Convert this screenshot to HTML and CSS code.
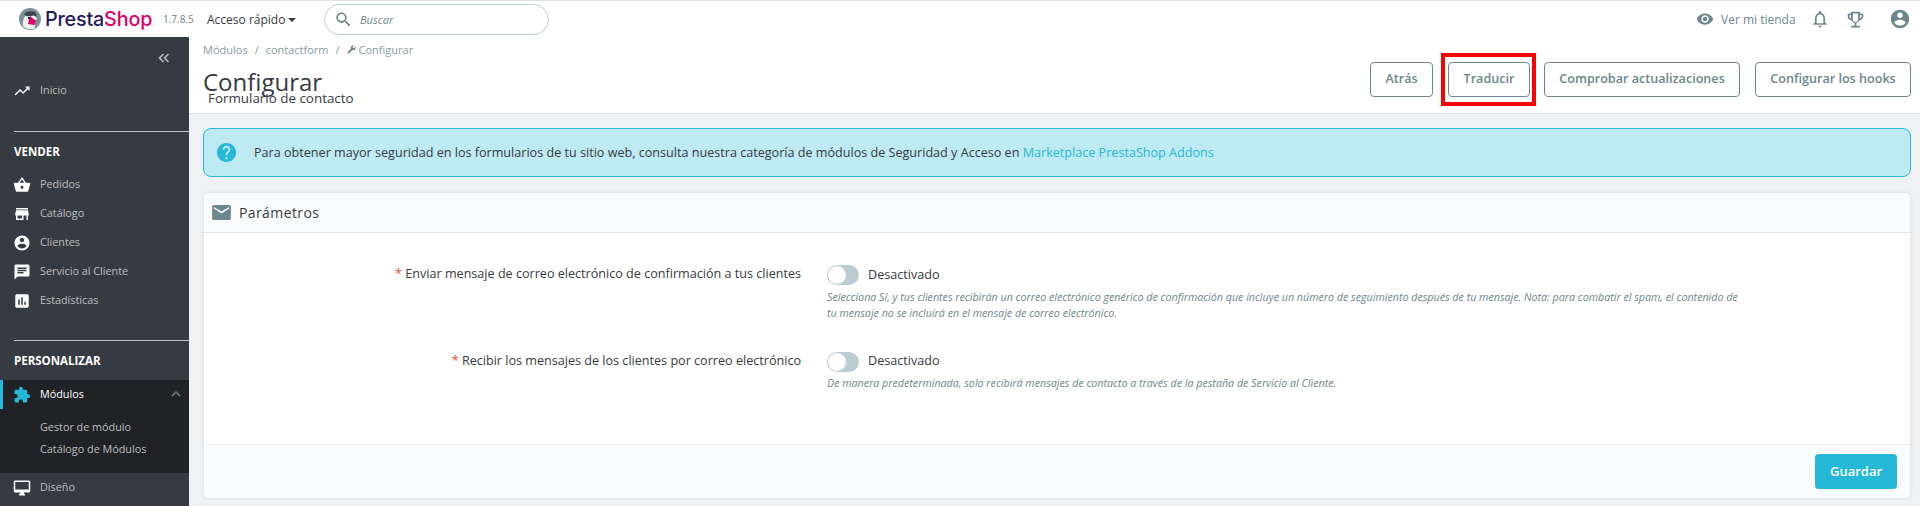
FILE: index.html
```html
<!DOCTYPE html>
<html lang="es">
<head>
  <meta charset="UTF-8">
  <title>Configurar - PrestaShop</title>
  <link rel="stylesheet" href="styles.css">
</head>
<body>
  <header class="topbar">
    <div class="logo">
      <svg class="logo-mark" viewBox="0 0 22 22">
        <circle cx="11" cy="11" r="11" fill="#7b8f99"/>
        <path d="M4 18c-1-6 2-13 8-13 4 0 6 3 6 6l-3 2 1 7c-2 2-9 2-12-2z" fill="#f4f1ee"/>
        <path d="M5 6c2-3 9-4 12-1l1 5c-2-3-4-3-6-2-3 0-5 1-7-2z" fill="#3c4450"/>
        <path d="M11 8l6 5-2 4-6-1z" fill="#df0067"/>
        <circle cx="10" cy="10" r="1.2" fill="#25234f"/>
      </svg>
      <span class="logo-name">Presta<span class="logo-pink">Shop</span></span>
    </div>
    <span class="version">1.7.8.5</span>
    <span class="quick">Acceso rápido<i class="caret"></i></span>
    <div class="search">
      <svg class="ic ic-search" viewBox="0 0 24 24"><path d="M15.5 14h-.79l-.28-.27C15.41 12.59 16 11.11 16 9.5 16 5.91 13.09 3 9.5 3S3 5.91 3 9.5 5.91 16 9.5 16c1.61 0 3.09-.59 4.23-1.57l.27.28v.79l5 4.99L20.49 19l-4.99-5zm-6 0C7.01 14 5 11.99 5 9.5S7.01 5 9.5 5 14 7.01 14 9.5 11.99 14 9.5 14z"/></svg>
      <span>Buscar</span>
    </div>
    <div class="top-right">
      <svg class="ic ic-eye" viewBox="0 0 24 24"><path d="M12 4.5C7 4.5 2.73 7.61 1 12c1.73 4.39 6 7.5 11 7.5s9.27-3.11 11-7.5c-1.73-4.39-6-7.5-11-7.5zM12 17c-2.76 0-5-2.24-5-5s2.24-5 5-5 5 2.24 5 5-2.24 5-5 5zm0-8c-1.66 0-3 1.34-3 3s1.34 3 3 3 3-1.34 3-3-1.34-3-3-3z"/></svg>
      <span class="shop-link">Ver mi tienda</span>
      <svg class="ic ic-bell" viewBox="0 0 24 24"><path d="M12 22c1.1 0 2-.9 2-2h-4c0 1.1.9 2 2 2zm6-6v-5c0-3.07-1.63-5.64-4.5-6.32V4c0-.83-.67-1.5-1.5-1.5s-1.5.67-1.5 1.5v.68C7.64 5.36 6 7.92 6 11v5l-2 2v1h16v-1l-2-2zm-2 1H8v-6c0-2.48 1.51-4.5 4-4.5s4 2.02 4 4.5v6z"/></svg>
      <svg class="ic ic-trophy" viewBox="0 0 24 24"><path fill-rule="evenodd" d="M19 5h-2V3H7v2H5c-1.1 0-2 .9-2 2v1c0 2.55 1.92 4.63 4.39 4.94.63 1.5 1.98 2.63 3.61 2.96V19H7v2h10v-2h-4v-3.1c1.63-.33 2.98-1.46 3.61-2.96C19.08 12.63 21 10.55 21 8V7c0-1.1-.9-2-2-2zM5 8V7h2v3.82C5.84 10.4 5 9.3 5 8zm10 4c0 1.65-1.35 3-3 3s-3-1.35-3-3V5h6v7zm4-4c0 1.3-.84 2.4-2 2.82V7h2v1z"/></svg>
      <svg class="ic ic-user" viewBox="0 0 24 24"><path d="M12 2C6.48 2 2 6.48 2 12s4.48 10 10 10 10-4.48 10-10S17.52 2 12 2zm0 3c1.66 0 3 1.34 3 3s-1.34 3-3 3-3-1.34-3-3 1.34-3 3-3zm0 14.2c-2.5 0-4.71-1.28-6-3.22.03-1.99 4-3.08 6-3.08 1.99 0 5.97 1.09 6 3.08-1.29 1.94-3.5 3.22-6 3.22z"/></svg>
    </div>
  </header>

  <div class="layout">
    <nav class="sidebar">
      <div class="collapse">
        <svg class="collapse-ic" viewBox="0 0 12 10"><path d="M5.5 1L1.5 5l4 4M10.5 1l-4 4 4 4"/></svg>
      </div>
      <a class="item item-home"><svg class="ic" viewBox="0 0 24 24"><path d="M16 6l2.29 2.29-4.88 4.88-4-4L2 16.59 3.41 18l6-6 4 4 6.3-6.29L22 12V6z"/></svg>Inicio</a>
      <div class="group">VENDER</div>
      <a class="item"><svg class="ic" viewBox="0 0 24 24"><path d="M17.21 9l-4.38-6.56c-.19-.28-.51-.42-.83-.42-.32 0-.64.14-.83.43L6.79 9H2c-.55 0-1 .45-1 1 0 .09.01.18.04.27l2.54 9.27c.23.84 1 1.46 1.92 1.46h13c.92 0 1.69-.62 1.93-1.46l2.54-9.27L23 10c0-.55-.45-1-1-1h-4.79zM9 9l3-4.4L15 9H9zm3 8c-1.1 0-2-.9-2-2s.9-2 2-2 2 .9 2 2-.9 2-2 2z"/></svg>Pedidos</a>
      <a class="item"><svg class="ic" viewBox="0 0 24 24"><path d="M20 4H4v2h16V4zm1 10v-2l-1-5H4l-1 5v2h1v6h10v-6h4v6h2v-6h1zm-9 4H6v-4h6v4z"/></svg>Catálogo</a>
      <a class="item"><svg class="ic" viewBox="0 0 24 24"><path d="M12 2C6.48 2 2 6.48 2 12s4.48 10 10 10 10-4.48 10-10S17.52 2 12 2zm0 3c1.66 0 3 1.34 3 3s-1.34 3-3 3-3-1.34-3-3 1.34-3 3-3zm0 14.2c-2.5 0-4.71-1.28-6-3.22.03-1.99 4-3.08 6-3.08 1.99 0 5.97 1.09 6 3.08-1.29 1.94-3.5 3.22-6 3.22z"/></svg>Clientes</a>
      <a class="item"><svg class="ic" viewBox="0 0 24 24"><path d="M20 2H4c-1.1 0-1.99.9-1.99 2L2 22l4-4h14c1.1 0 2-.9 2-2V4c0-1.1-.9-2-2-2zM6 9h12v2H6V9zm8 5H6v-2h8v2zm4-6H6V6h12v2z"/></svg>Servicio al Cliente</a>
      <a class="item"><svg class="ic" viewBox="0 0 24 24"><path d="M19 3H5c-1.1 0-2 .9-2 2v14c0 1.1.9 2 2 2h14c1.1 0 2-.9 2-2V5c0-1.1-.9-2-2-2zM9 17H7v-7h2v7zm4 0h-2V7h2v10zm4 0h-2v-4h2v4z"/></svg>Estadísticas</a>
      <div class="group group-custom">PERSONALIZAR</div>
      <div class="active-block">
        <a class="item item-active"><svg class="ic" viewBox="0 0 24 24"><path d="M20.5 11H19V7c0-1.1-.9-2-2-2h-4V3.5C13 2.12 11.88 1 10.5 1S8 2.12 8 3.5V5H4c-1.1 0-1.99.9-1.99 2v3.8H3.5c1.49 0 2.7 1.21 2.7 2.7s-1.21 2.7-2.7 2.7H2V20c0 1.1.9 2 2 2h3.8v-1.5c0-1.49 1.21-2.7 2.7-2.7 1.49 0 2.7 1.21 2.7 2.7V22H17c1.1 0 2-.9 2-2v-4h1.5c1.38 0 2.5-1.12 2.5-2.5S21.88 11 20.5 11z"/></svg>Módulos<svg class="ic chevron" viewBox="0 0 24 24"><path d="M12 8l-6 6 1.41 1.41L12 10.83l4.59 4.58L18 14z"/></svg></a>
        <a class="subitem">Gestor de módulo</a>
        <a class="subitem">Catálogo de Módulos</a>
      </div>
      <a class="item"><svg class="ic" viewBox="0 0 24 24"><path d="M21 2H3c-1.1 0-2 .9-2 2v12c0 1.1.9 2 2 2h7l-2 3v1h8v-1l-2-3h7c1.1 0 2-.9 2-2V4c0-1.1-.9-2-2-2zm0 12H3V4h18v10z"/></svg>Diseño</a>
    </nav>

    <main class="main">
      <section class="page-head">
        <div class="head-left">
          <div class="crumbs">
            <span>Módulos</span><span class="sep">/</span><span>contactform</span><span class="sep">/</span>
            <svg class="wrench" viewBox="0 0 24 24"><path d="M22.7 19l-9.1-9.1c.9-2.3.4-5-1.5-6.9-2-2-5-2.4-7.4-1.3L9 6 6 9 1.6 4.7C.4 7.1.9 10.1 2.9 12.1c1.9 1.9 4.6 2.4 6.9 1.5l9.1 9.1c.4.4 1 .4 1.4 0l2.3-2.3c.5-.4.5-1.1.1-1.4z"/></svg><span>Configurar</span>
          </div>
          <h1 class="title">Configurar</h1>
          <div class="subtitle">Formulario de contacto</div>
        </div>
        <div class="actions">
          <a class="btn btn-back">Atrás</a>
          <span class="highlight"><a class="btn btn-translate">Traducir</a></span>
          <a class="btn btn-check">Comprobar actualizaciones</a>
          <a class="btn btn-hooks">Configurar los hooks</a>
        </div>
      </section>

      <div class="content">
        <div class="alert">
          <svg class="alert-ic" viewBox="2 2 20 20"><path d="M12 2C6.48 2 2 6.48 2 12s4.48 10 10 10 10-4.48 10-10S17.52 2 12 2zm1 17h-2v-2h2v2zm2.07-7.75l-.9.92C13.45 12.9 13 13.5 13 15h-2v-.5c0-1.1.45-2.1 1.17-2.83l1.24-1.26c.37-.36.59-.86.59-1.41 0-1.1-.9-2-2-2s-2 .9-2 2H8c0-2.21 1.79-4 4-4s4 1.79 4 4c0 .88-.36 1.68-.93 2.25z"/></svg>
          <p>Para obtener mayor seguridad en los formularios de tu sitio web, consulta nuestra categoría de módulos de Seguridad y Acceso en <a>Marketplace PrestaShop Addons</a></p>
        </div>

        <div class="panel">
          <div class="panel-head">
            <svg class="mail" viewBox="2 4 20 16"><path d="M20 4H4c-1.1 0-1.99.9-1.99 2L2 18c0 1.1.9 2 2 2h16c1.1 0 2-.9 2-2V6c0-1.1-.9-2-2-2zm0 4l-8 5-8-5V6l8 5 8-5v2z"/></svg>
            <h2>Parámetros</h2>
          </div>
          <div class="panel-body">
            <div class="field field-first">
              <label><em>*</em> Enviar mensaje de correo electrónico de confirmación a tus clientes</label>
              <div class="control">
                <div class="switch-row"><span class="switch"><i></i></span><span class="switch-text">Desactivado</span></div>
                <p class="help">Selecciona Sí, y tus clientes recibirán un correo electrónico genérico de confirmación que incluye un número de seguimiento después de tu mensaje. Nota: para combatir el spam, el contenido de tu mensaje no se incluirá en el mensaje de correo electrónico.</p>
              </div>
            </div>
            <div class="field field-second">
              <label><em>*</em> Recibir los mensajes de los clientes por correo electrónico</label>
              <div class="control">
                <div class="switch-row"><span class="switch"><i></i></span><span class="switch-text">Desactivado</span></div>
                <p class="help">De manera predeterminada, solo recibirá mensajes de contacto a través de la pestaña de Servicio al Cliente.</p>
              </div>
            </div>
          </div>
          <div class="panel-foot"><a class="btn-save">Guardar</a></div>
        </div>
      </div>
    </main>
  </div>
</body>
</html>
```

FILE: styles.css
```css
* {
  box-sizing: border-box;
}
html, body {
  height: 100%;
}
body {
  margin: 0;
  overflow: hidden;
  font-family: "Open Sans", sans-serif;
  font-size: 12px;
  color: #363a41;
  background: #eff1f2;
}
svg.ic {
  fill: currentColor;
  flex: none;
}

/* barra superior */
.topbar {
  height: 37px;
  display: flex;
  align-items: center;
  background: #fff;
  border-top: 1px solid #dfdfdf;
  padding-left: 19px;
}
.logo {
  display: flex;
  align-items: center;
  width: 144px;
}
.logo-mark {
  width: 22px;
  height: 22px;
  margin-right: 4px;
}
.logo-name {
  font-family: Inter, sans-serif;
  font-weight: 500;
  font-size: 19.8px;
  letter-spacing: -0.2px;
  color: #251b5b;
}
.logo-pink {
  color: #df0067;
}
.version {
  width: 44px;
  font-size: 10px;
  color: #6c868e;
}
.quick {
  width: 117px;
  font-size: 12px;
  color: #363a41;
}
.caret {
  display: inline-block;
  margin-left: 3px;
  vertical-align: 2px;
  border: 4px solid transparent;
  border-top-color: #363a41;
  border-bottom: 0;
}
.search {
  width: 225px;
  height: 31px;
  display: flex;
  align-items: center;
  gap: 7px;
  padding-left: 9px;
  border: 1px solid #bbcdd2;
  border-radius: 16px;
  font-size: 11px;
  font-style: italic;
  color: #6c868e;
}
.ic-search {
  width: 19px;
  height: 19px;
  color: #6c868e;
}
.top-right {
  margin-left: auto;
  display: flex;
  align-items: center;
  color: #6c868e;
}
.ic-eye {
  width: 18px;
  height: 18px;
  margin-right: 7px;
}
.shop-link {
  width: 73px;
  font-size: 12px;
  color: #6c868e;
  white-space: nowrap;
}
.ic-bell {
  width: 20px;
  height: 20px;
  margin-left: 16px;
}
.ic-trophy {
  width: 21px;
  height: 21px;
  margin-left: 15px;
}
.ic-user {
  width: 22px;
  height: 22px;
  margin-left: 23px;
  margin-right: 9px;
}

.layout {
  display: flex;
  height: calc(100% - 37px);
}

/* menu lateral */
.sidebar {
  width: 189px;
  flex: none;
  background: #363a41;
  color: #bebebe;
  overflow: hidden;
}
.collapse {
  height: 39px;
  padding: 13px 19px 0 0;
  text-align: right;
}
.collapse-ic {
  display: inline-block;
  width: 12px;
  height: 10px;
  fill: none;
  stroke: #bebebe;
  stroke-width: 1.6;
}
.item {
  position: relative;
  height: 29px;
  display: flex;
  align-items: center;
  padding: 0 0 2px 13px;
  font-size: 10.8px;
  color: #bebebe;
}
.item svg.ic {
  width: 18px;
  height: 18px;
  margin: 2px 9px 0 0;
  color: #fff;
}
.group {
  margin: 26px 0 0 14px;
  height: 39px;
  padding-top: 12px;
  border-top: 1px solid #bebebe;
  font-size: 11.5px;
  font-weight: 700;
  color: #fff;
}
.group-custom {
  margin-top: 25px;
  height: 40px;
}
.active-block {
  height: 93px;
  background: #202226;
}
.item-active {
  color: #fff;
  border-left: 3px solid #25b9d7;
  padding-left: 10px;
}
.item-active svg.ic {
  color: #25b9d7;
}
.item-active svg.chevron {
  width: 18px;
  height: 18px;
  margin: 0;
  position: absolute;
  right: 4px;
  color: #6c868e;
}
.subitem {
  display: block;
  height: 22px;
  line-height: 20px;
  padding-left: 40px;
  font-size: 10.8px;
  color: #bebebe;
}
.item-active + .subitem {
  margin-top: 8px;
}

/* contenido */
.main {
  flex: 1;
  min-width: 0;
}
.page-head {
  height: 77px;
  display: flex;
  justify-content: space-between;
  background: #fff;
  border-bottom: 1px solid #dfe3e5;
  padding: 0 9px 0 14px;
}
.crumbs {
  height: 25px;
  display: flex;
  align-items: center;
  gap: 5px;
  font-size: 11px;
  color: #8a9ba1;
}
.sep {
  margin: 0 2px;
}
.wrench {
  width: 9px;
  height: 9px;
  fill: #6c868e;
  transform: scaleX(-1);
  margin-right: -2px;
}
.title {
  margin: 4px 0 0;
  font-size: 24px;
  line-height: 32px;
  font-weight: 400;
  color: #363a41;
}
.subtitle {
  margin: -9px 0 0 5px;
  font-size: 13.4px;
  line-height: 19px;
  color: #363a41;
}
.actions {
  display: flex;
  align-items: flex-start;
  padding-top: 25px;
}
.btn {
  height: 35px;
  display: flex;
  align-items: center;
  justify-content: center;
  padding-bottom: 2px;
  border: 1px solid #6c868e;
  border-radius: 4px;
  font-size: 12.6px;
  font-weight: 600;
  color: #6c868e;
  background: #fff;
}
.btn-back {
  width: 63px;
  margin-right: 8px;
}
.highlight {
  margin: -9px 8px 0 0;
  padding: 5px 2px 5px 3px;
  border: 4px solid #f00;
}
.btn-translate {
  width: 82px;
}
.btn-check {
  width: 196px;
  margin-right: 15px;
}
.btn-hooks {
  width: 156px;
}

.content {
  padding: 14px 9px 0 14px;
}
.alert {
  height: 49px;
  display: flex;
  align-items: center;
  gap: 18px;
  padding-left: 13px;
  background: #beeaf3;
  border: 1px solid #25b9d7;
  border-radius: 8px;
}
.alert-ic {
  width: 19px;
  height: 19px;
  fill: #25b9d7;
  flex: none;
}
.alert p {
  margin: 0;
  font-size: 12.6px;
  color: #363a41;
}
.alert a {
  color: #25b9d7;
}

.panel {
  margin: 16px 1px 0 1px;
  height: 305px;
  display: flex;
  flex-direction: column;
  background: #fff;
  border-radius: 5px;
  box-shadow: 0 0 4px rgba(0, 0, 0, 0.1);
}
.panel-head {
  height: 40px;
  display: flex;
  align-items: center;
  padding-left: 8px;
  background: #fafbfc;
  border-bottom: 1px solid #dfe3e5;
  border-radius: 5px 5px 0 0;
}
.mail {
  width: 19px;
  height: 15px;
  fill: #6c868e;
  margin-right: 8px;
}
.panel-head h2 {
  margin: 0;
  font-size: 14px;
  font-weight: 400;
  letter-spacing: 0.4px;
  color: #363a41;
}
.panel-body {
  flex: 1;
}
.field {
  display: grid;
  grid-template-columns: 597px 1fr;
  column-gap: 26px;
}
.field-first {
  padding-top: 32px;
}
.field-second {
  padding-top: 31px;
}
.field label {
  text-align: right;
  font-size: 12.6px;
  line-height: 18px;
  color: #363a41;
}
.field label em {
  font-style: normal;
  color: #f54c3e;
}
.switch-row {
  height: 20px;
  display: flex;
  align-items: center;
  gap: 9px;
  font-size: 12.6px;
  color: #363a41;
}
.switch-text {
  margin-bottom: 2px;
}
.switch {
  width: 32px;
  height: 20px;
  padding: 1px;
  border-radius: 10px;
  background: #bbcdd2;
}
.switch i {
  display: block;
  width: 18px;
  height: 18px;
  border-radius: 50%;
  background: #fff;
}
.help {
  margin: 3.5px 0 0;
  width: 920px;
  font-size: 10.7px;
  line-height: 16px;
  font-style: italic;
  color: #6c868e;
}
.panel-foot {
  height: 54px;
  display: flex;
  align-items: center;
  justify-content: flex-end;
  padding-right: 13px;
  background: #fafbfc;
  border-top: 1px solid #eceef0;
  border-radius: 0 0 5px 5px;
}
.btn-save {
  width: 82px;
  height: 35px;
  display: flex;
  align-items: center;
  justify-content: center;
  padding-bottom: 2px;
  border-radius: 4px;
  background: #25b9d7;
  color: #fff;
  font-size: 13px;
  font-weight: 600;
}
```
